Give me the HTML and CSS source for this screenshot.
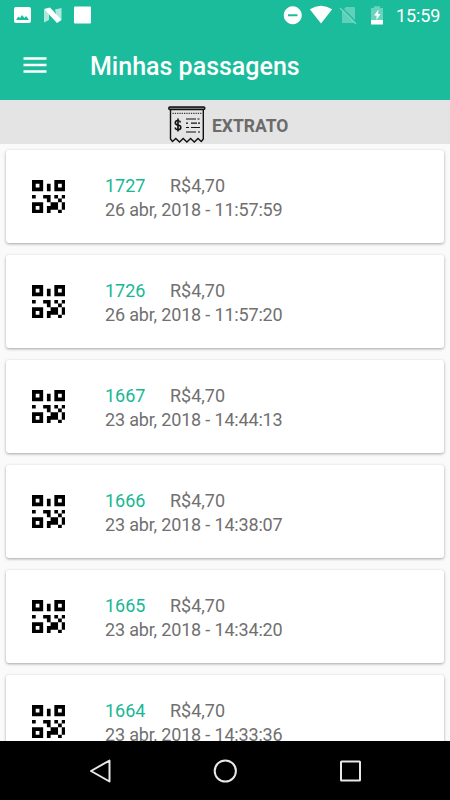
FILE: index.html
```
<!DOCTYPE html>
<html lang="pt-BR">
<head>
<meta charset="utf-8">
<title>Minhas passagens</title>
<link rel="stylesheet" href="styles.css">
</head>
<body>
<svg class="defs" aria-hidden="true">
  <symbol id="qr" viewBox="0 0 9 9">
    <path fill-rule="evenodd" d="M0 0h3v3H0zM1 1v1h1V1zM6 0h3v3H6zM7 1v1h1V1zM0 6h3v3H0zM1 7v1h1V7zM4 1h1v2H4zM0 4h1v1H0zM3 4h2v2H4V5H3zM6 4h1v1H6zM8 4h1v1H8zM7 5h1v1H7zM5 6h2v2H5v1H4V7h1zM8 6h1v2H8zM7 8h1v1H7z"/>
  </symbol>
</svg>
<div class="screen">
  <header class="top">
    <div class="status">
      <svg class="status-icons" width="100" height="30" viewBox="0 0 100 30">
        <path fill="#fff" fill-rule="evenodd" d="M16 7h13q2 0 2 2v12q0 2-2 2H16q-2 0-2-2V9q0-2 2-2zM16.500 20H28.500V19l-2.500-3-1.500 2-2.500-3-2 3-1.500-1.500-2 2.500z"/>
        <path fill="#fff" opacity=".65" d="M44 9.500l5 3v7.500l-5 2.500zM55 9.500l6.500-1.500v12l-4.500-2z"/>
        <path fill="#fff" d="M44 9l6-1.500L61.500 20l-4.500 3z"/>
        <rect x="74" y="6.500" width="17" height="17" rx="1" fill="#fff"/>
      </svg>
      <div class="status-right">
        <svg width="112" height="30" viewBox="278 0 112 30">
          <path fill="#fff" fill-rule="evenodd" d="M292.700 6.300a9 9 0 1 0 .1 0zM288 14.200h9.500v2H288z"/>
          <path fill="#fff" d="M309.800 9.300Q321 2.200 332.200 9.300L321 23.500z"/>
          <path fill="#fff" opacity=".3" d="M346 7h8q1 0 1 1v15h-13V11z"/>
          <path d="M341 7l16 16" stroke="#1bbc9b" stroke-width="1.500"/>
          <path d="M340 8l16 16" stroke="#77d7c3" stroke-width="1.300"/>
          <path fill="#fff" opacity=".35" d="M371 8h3V6.300h6V8h3v12h-12z"/>
          <path fill="#fff" d="M371 20h12v4.500h-12zM378.500 9.500l-4.500 6h2.500v4.500l4-6h-2.500z"/>
        </svg>
        <span class="clock">15:59</span>
      </div>
    </div>
    <div class="toolbar">
      <svg width="24" height="18" viewBox="0 0 24 18"><path d="M0.500 2.500h23M0.500 9h23M0.500 15.500h23" stroke="#fff" stroke-width="2.500"/></svg>
      <h1>Minhas passagens</h1>
    </div>
  </header>
  <div class="extract">
    <svg width="38" height="38" viewBox="0 0 38 38" fill="none" stroke="#111">
      <path d="M2.500 3v30l2 2.500 3.300-3 3.700 3.500 3.700-3.500 3.700 3.500 3.700-3.500 3.700 3.500 3.700-3.500 3.300 3 2-2.500V3" stroke-width="1.400"/>
      <rect x=".8" y="1" width="36" height="2.600" rx="1" fill="#777" stroke-width="1.400"/>
      <path d="M4.500 7.300h29" stroke-width="1" stroke-dasharray="1.300 1"/>
      <path d="M18 13h10m1.500 0h2M18 17.200h2m3 0h6m1 0h2M18 21.500h3m2 0h9M18 26h10m2 0h2" stroke-width="1.200"/>
      <path d="M12.500 16.500q-.5-2-2.500-2-2.700 0-2.700 2.200 0 1.900 2.700 2.300 2.800.4 2.800 2.500 0 2.200-2.800 2.200-2.500 0-2.800-2.200M10 12.500v13" stroke-width="1.600"/>
    </svg>
    <span>EXTRATO</span>
  </div>
  <main class="list">
    <article class="card"><svg class="qr"><use href="#qr"/></svg><div><p><b>1727</b>R$4,70</p><p class="date">26 abr, 2018 - 11:57:59</p></div></article>
    <article class="card"><svg class="qr"><use href="#qr"/></svg><div><p><b>1726</b>R$4,70</p><p class="date">26 abr, 2018 - 11:57:20</p></div></article>
    <article class="card"><svg class="qr"><use href="#qr"/></svg><div><p><b>1667</b>R$4,70</p><p class="date">23 abr, 2018 - 14:44:13</p></div></article>
    <article class="card"><svg class="qr"><use href="#qr"/></svg><div><p><b>1666</b>R$4,70</p><p class="date">23 abr, 2018 - 14:38:07</p></div></article>
    <article class="card"><svg class="qr"><use href="#qr"/></svg><div><p><b>1665</b>R$4,70</p><p class="date">23 abr, 2018 - 14:34:20</p></div></article>
    <article class="card"><svg class="qr"><use href="#qr"/></svg><div><p><b>1664</b>R$4,70</p><p class="date">23 abr, 2018 - 14:33:36</p></div></article>
  </main>
  <nav class="nav">
    <svg width="24" height="26" viewBox="0 0 24 26"><path d="M3 13L21.500 2.500v21z"/></svg>
    <svg width="24" height="26" viewBox="0 0 24 26"><circle cx="12.300" cy="13" r="10.600"/></svg>
    <svg width="24" height="26" viewBox="0 0 24 26"><rect x="3" y="3.500" width="19" height="19" rx=".5"/></svg>
  </nav>
</div>
</body>
</html>
```
FILE: styles.css
```
* { box-sizing: border-box; }
body { margin: 0; font-family: Roboto, "Liberation Sans", sans-serif; }
h1, p { margin: 0; }
svg { display: block; flex: none; }
.defs { display: none; }
.screen {
  width: 450px;
  height: 800px;
  display: flex;
  flex-direction: column;
  overflow: hidden;
  background: #fafafa;
}
.top { height: 100px; flex: none; background: #1bbc9b; color: #fff; }
.status { height: 30px; display: flex; justify-content: space-between; }
.status-right { display: flex; align-items: center; padding-right: 9px; }
.clock { width: 51px; padding: 2px 0 0 6px; line-height: 32px; font-size: 18px; letter-spacing: -.1px; white-space: nowrap; }
.toolbar { height: 70px; display: flex; align-items: center; gap: 43px; padding-left: 23px; }
.toolbar h1 { font-size: 25px; font-weight: 500; line-height: 30px; padding-top: 3px; }
.extract {
  height: 44px;
  flex: none;
  display: flex;
  align-items: center;
  gap: 6px;
  padding: 6px 0 0 168px;
  background: #e4e4e4;
  color: #6b6b6b;
  font-size: 17.500px;
  font-weight: 700;
}
.extract span { padding-top: 2px; }
.list { flex: 1; min-height: 0; overflow: hidden; padding: 6px 6px 0; }
.card {
  height: 93px;
  margin-bottom: 12px;
  display: flex;
  align-items: center;
  gap: 40px;
  padding-left: 25.500px;
  border-radius: 3px;
  background: #fff;
  box-shadow: 0 1px 3px rgba(0, 0, 0, .35);
  color: #707070;
  font-size: 18px;
  line-height: 24px;
}
.card div { padding-top: 2px; }
.card b { display: inline-block; width: 65px; font-weight: 400; color: #18b794; }
.card .date { letter-spacing: -.17px; }
.qr { width: 33.500px; height: 33.500px; }
.nav {
  height: 59.500px;
  flex: none;
  display: flex;
  justify-content: space-between;
  align-items: center;
  padding: 1px 88px 0;
  background: #000;
}
.nav svg { fill: none; stroke: #e8e8e8; stroke-width: 2; stroke-linejoin: round; }
```
